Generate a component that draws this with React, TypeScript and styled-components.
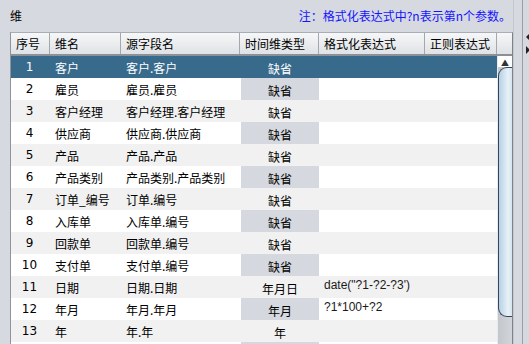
import React from "react"
import styled, { createGlobalStyle } from "styled-components"

const GlobalStyle = createGlobalStyle`
  html, body {
    margin: 0;
    padding: 0;
    background: #d6d9df;
    overflow: hidden;
  }
  body {
    font-family: "Noto Sans CJK SC", "Liberation Sans", sans-serif;
    font-size: 12px;
    color: #000;
  }
`

const COLS = "39px 71px 119px 79px 106px 72px"

type Dim = {
  name: string
  source: string
  timeType: string
  format?: string
}

const dims: Dim[] = [
  { name: "客户", source: "客户.客户", timeType: "缺省" },
  { name: "雇员", source: "雇员.雇员", timeType: "缺省" },
  { name: "客户经理", source: "客户经理.客户经理", timeType: "缺省" },
  { name: "供应商", source: "供应商.供应商", timeType: "缺省" },
  { name: "产品", source: "产品.产品", timeType: "缺省" },
  { name: "产品类别", source: "产品类别.产品类别", timeType: "缺省" },
  { name: "订单_编号", source: "订单.编号", timeType: "缺省" },
  { name: "入库单", source: "入库单.编号", timeType: "缺省" },
  { name: "回款单", source: "回款单.编号", timeType: "缺省" },
  { name: "支付单", source: "支付单.编号", timeType: "缺省" },
  { name: "日期", source: "日期.日期", timeType: "年月日", format: "date(\"?1-?2-?3')" },
  { name: "年月", source: "年月.年月", timeType: "年月", format: "?1*100+?2" },
  { name: "年", source: "年.年", timeType: "年" },
  { name: "", source: "", timeType: "" },
]

const Page = styled.div`
  display: flex;
  width: 529px;
  height: 344px;
  overflow: hidden;
`

const Main = styled.div`
  width: 513px;
  display: flex;
  flex-direction: column;
`

const TopBar = styled.div`
  height: 32px;
  padding: 0 2px 2px 10px;
  box-sizing: border-box;
  display: flex;
  align-items: center;
  justify-content: space-between;
`

const Title = styled.div`
  font-size: 12px;
`

const Note = styled.div`
  color: #1414ff;
  font-size: 12px;
`

const Table = styled.div`
  margin-left: 10px;
  flex: 1;
  border-left: 1px solid #8f949b;
  border-top: 1px solid #a9adb4;
  border-right: 1px solid #7e838a;
  background: #ffffff;
  display: flex;
  flex-direction: column;
  overflow: hidden;
`

const HeaderRow = styled.div`
  display: grid;
  grid-template-columns: ${COLS} 1fr;
  height: 23px;
  box-sizing: border-box;
  border-bottom: 2px solid #8c9097;
  background: linear-gradient(#f6f7f8, #dfe2e6);
`

const HeadCell = styled.div`
  border-right: 1px solid #a3a7ae;
  padding-left: 5px;
  display: flex;
  align-items: center;
  white-space: nowrap;
  font-size: 12px;
  &:last-child {
    border-right: none;
  }
`

const Body = styled.div`
  flex: 1;
  display: flex;
  min-height: 0;
`

const Rows = styled.div`
  width: 486px;
  display: flex;
  flex-direction: column;
`

const Row = styled.div<{ $index: number; $selected: boolean }>`
  display: grid;
  grid-template-columns: ${COLS};
  height: 22px;
  flex-shrink: 0;
  background: ${({ $selected, $index }) =>
    $selected ? "#386a8c" : $index % 2 === 1 ? "#ffffff" : "#f1f1f1"};
  color: ${({ $selected }) => ($selected ? "#ffffff" : "#000000")};
`

const Cell = styled.div<{ $center?: boolean }>`
  display: flex;
  align-items: center;
  justify-content: ${({ $center }) => ($center ? "center" : "flex-start")};
  padding-left: ${({ $center }) => ($center ? "0" : "5px")};
  white-space: nowrap;
  overflow: hidden;
`

const NumCell = styled(Cell)`
  font-family: "DejaVu Sans", "Liberation Sans", sans-serif;
  font-size: 12px;
  justify-content: center;
  padding: 0 2px 0 0;
`

const TimeCell = styled.div<{ $shaded: boolean }>`
  display: flex;
  align-items: flex-end;
  justify-content: center;
  padding-bottom: 1px;
  box-sizing: border-box;
  background: ${({ $shaded }) => ($shaded ? "#d5d8df" : "transparent")};
  margin-left: 1px;
`

const FormatCell = styled(Cell)`
  font-family: "Liberation Sans", sans-serif;
  font-size: 12px;
  align-items: flex-start;
  padding-top: 2px;
  color: #1a1a1a;
`

const ScrollBar = styled.div`
  width: 16px;
  display: flex;
  flex-direction: column;
  background: linear-gradient(90deg, #c3c6cb, #d2d5da);
  border-left: 1px solid #e8eaed;
`

const ArrowUp = styled.div`
  height: 11px;
  display: flex;
  justify-content: center;
  align-items: flex-end;
  background: #ffffff;
  font-size: 8px;
  color: #333;
  line-height: 1;
`

const Thumb = styled.div`
  height: 250px;
  box-sizing: border-box;
  border: 1px solid #31465a;
  border-right: none;
  border-radius: 0 0 0 9px;
  border-top-left-radius: 9px;
  background: linear-gradient(90deg, #b7d0e4, #e9f1f8 70%, #d6e4ef);
`

const Divider = styled.div`
  flex: 1;
  position: relative;
  border-left: 1px solid #c4c7cc;
`

const DividerLine = styled.div`
  position: absolute;
  left: 8px;
  top: 0;
  bottom: 0;
  border-left: 1px solid #9a9ea5;
`

const Tri = styled.div<{ $top: number; $dir: "left" | "right" }>`
  position: absolute;
  top: ${({ $top }) => $top}px;
  left: 12px;
  width: 0;
  height: 0;
  border-top: 4px solid transparent;
  border-bottom: 4px solid transparent;
  ${({ $dir }) =>
    $dir === "left"
      ? "border-right: 4px solid #222;"
      : "border-left: 4px solid #222;"}
`

export default function App() {
  return (
    <>
      <GlobalStyle />
      <Page>
        <Main>
          <TopBar>
            <Title>维</Title>
            <Note>注：格式化表达式中?n表示第n个参数。</Note>
          </TopBar>
          <Table>
            <HeaderRow>
              <HeadCell>序号</HeadCell>
              <HeadCell>维名</HeadCell>
              <HeadCell>源字段名</HeadCell>
              <HeadCell>时间维类型</HeadCell>
              <HeadCell>格式化表达式</HeadCell>
              <HeadCell>正则表达式</HeadCell>
              <HeadCell />
            </HeaderRow>
            <Body>
              <Rows>
                {dims.map((d, i) => (
                  <Row key={i} $index={i} $selected={i === 0}>
                    <NumCell>{d.name ? i + 1 : ""}</NumCell>
                    <Cell>{d.name}</Cell>
                    <Cell>{d.source}</Cell>
                    <TimeCell $shaded={i % 2 === 1}>{d.timeType}</TimeCell>
                    <FormatCell>{d.format ?? ""}</FormatCell>
                    <Cell />
                  </Row>
                ))}
              </Rows>
              <ScrollBar>
                <ArrowUp>▲</ArrowUp>
                <Thumb />
              </ScrollBar>
            </Body>
          </Table>
        </Main>
        <Divider>
          <DividerLine />
          <Tri $top={33} $dir="left" />
          <Tri $top={46} $dir="right" />
        </Divider>
      </Page>
    </>
  )
}
